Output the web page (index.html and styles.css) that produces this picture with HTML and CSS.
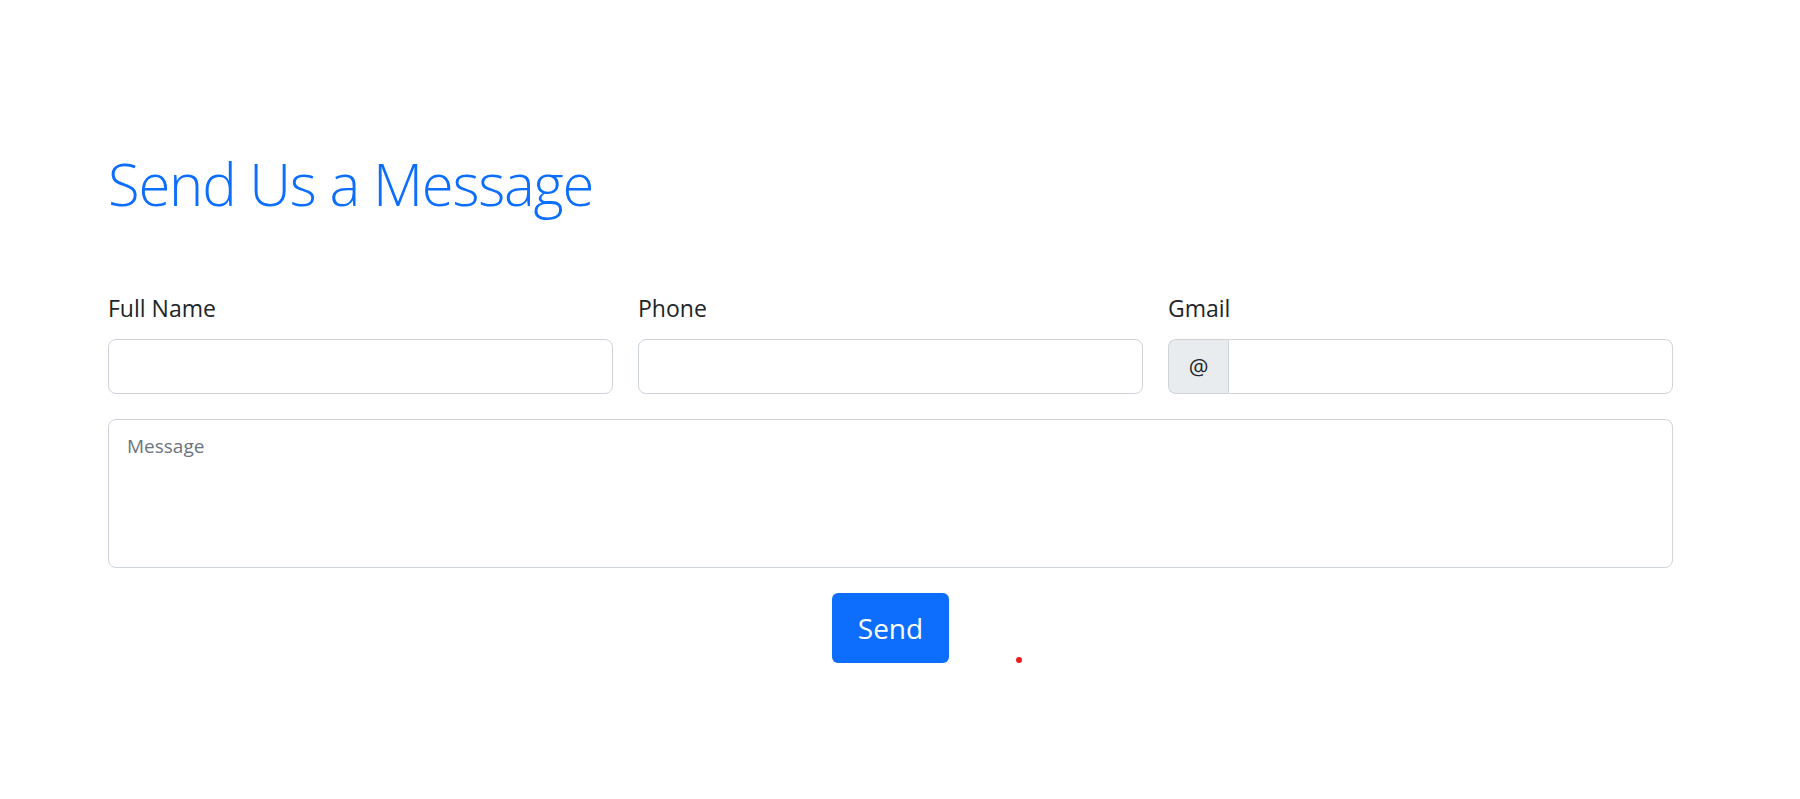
FILE: index.html
```html
<!DOCTYPE html>
<html lang="en">
<head>
<meta charset="utf-8">
<title>Send Us a Message</title>
<link rel="stylesheet" href="styles.css">
</head>
<body>
<main class="contact">
  <h1 class="contact-title">Send Us a Message</h1>
  <form class="contact-form">
    <div class="field-row">
      <div class="field">
        <label class="field-label" for="name">Full Name</label>
        <input class="field-input" id="name" type="text">
      </div>
      <div class="field">
        <label class="field-label" for="phone">Phone</label>
        <input class="field-input" id="phone" type="text">
      </div>
      <div class="field">
        <label class="field-label" for="gmail">Gmail</label>
        <div class="input-group">
          <span class="input-addon">@</span>
          <input class="field-input grouped" id="gmail" type="text">
        </div>
      </div>
    </div>
    <textarea class="field-textarea" placeholder="Message"></textarea>
    <div class="actions">
      <button class="send-btn" type="button">Send</button>
    </div>
  </form>
  <span class="cursor-dot"></span>
</main>
</body>
</html>
```
FILE: styles.css
```css
* { box-sizing: border-box; }

html, body {
  margin: 0;
  background: #fff;
}

body {
  font-family: "Open Sans", "Noto Sans", sans-serif;
  color: #212529;
}

.contact {
  position: relative;
  width: 1565px;
  margin-left: 108px;
  padding-top: 149px;
  height: 799px;
}

.contact-title {
  margin: 0 0 73px 0;
  font-size: 58px;
  line-height: 1.2;
  font-weight: 300;
  letter-spacing: -1.2px;
  color: #0d6efd;
}

.contact-form {
  display: flex;
  flex-direction: column;
  gap: 25px;
}

.field-row {
  display: grid;
  grid-template-columns: repeat(3, 1fr);
  gap: 25px;
}

.field {
  display: flex;
  flex-direction: column;
}

.field-label {
  font-size: 23px;
  line-height: 33px;
  margin-bottom: 14px;
}

.field-input {
  height: 55px;
  width: 100%;
  border: 1px solid #ced4da;
  border-radius: 8px;
  padding: 0 18px;
  font: inherit;
  font-size: 20px;
  background: #fff;
}

.input-group {
  display: flex;
  height: 55px;
}

.input-addon {
  width: 60px;
  flex: none;
  display: flex;
  align-items: center;
  justify-content: center;
  background: #e9ecef;
  border: 1px solid #ced4da;
  border-right: none;
  border-radius: 8px 0 0 8px;
  font-size: 22px;
  color: #212529;
}

.field-input.grouped {
  flex: 1;
  border-radius: 0 8px 8px 0;
}

.field-textarea {
  height: 149px;
  width: 100%;
  resize: none;
  border: 1px solid #ced4da;
  border-radius: 8px;
  padding: 12px 18px;
  font-family: inherit;
  font-size: 19px;
  line-height: 1.5;
  color: #212529;
}

.field-textarea::placeholder {
  color: #6c757d;
}

.actions {
  display: flex;
  justify-content: center;
}

.send-btn {
  width: 117px;
  height: 70px;
  border: none;
  border-radius: 6px;
  background: #0d6efd;
  color: #fff;
  font-family: inherit;
  font-size: 28px;
  padding: 0;
}

.cursor-dot {
  position: absolute;
  left: 908px;
  top: 657px;
  width: 6px;
  height: 6px;
  border-radius: 50%;
  background: #e81c1c;
}
```
